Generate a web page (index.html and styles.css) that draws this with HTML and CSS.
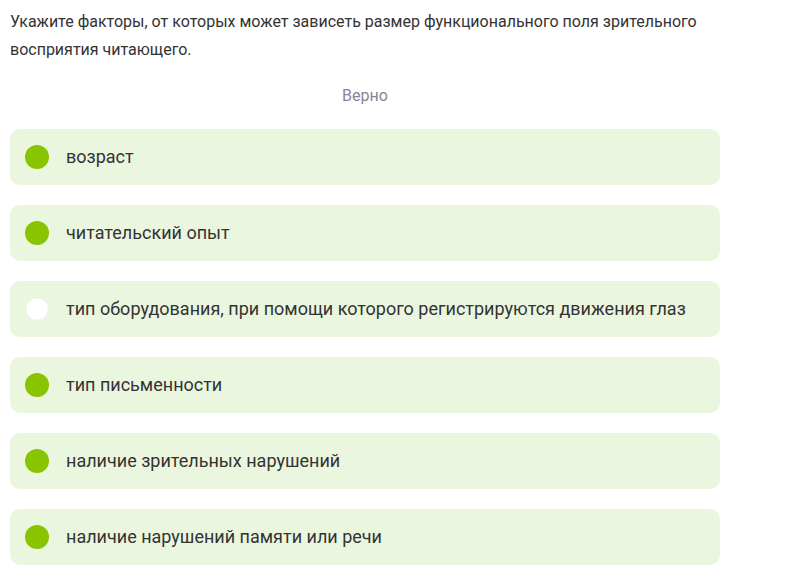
FILE: index.html
```html
<!DOCTYPE html>
<html lang="ru">
<head>
    <meta charset="UTF-8">
    <meta name="viewport" content="width=device-width, initial-scale=1.0">
    <title>Вопрос</title>
    <link rel="stylesheet" href="styles.css">
</head>
<body>

<div class="question">
    <p class="question-text">Укажите факторы, от которых может зависеть размер функционального поля зрительного восприятия читающего.</p>
    <div class="result">Верно</div>

    <div class="answers">
        <div class="answer">
            <span class="mark checked"></span>
            <span class="answer-text">возраст</span>
        </div>
        <div class="answer">
            <span class="mark checked"></span>
            <span class="answer-text">читательский опыт</span>
        </div>
        <div class="answer">
            <span class="mark"></span>
            <span class="answer-text">тип оборудования, при помощи которого регистрируются движения глаз</span>
        </div>
        <div class="answer">
            <span class="mark checked"></span>
            <span class="answer-text">тип письменности</span>
        </div>
        <div class="answer">
            <span class="mark checked"></span>
            <span class="answer-text">наличие зрительных нарушений</span>
        </div>
        <div class="answer">
            <span class="mark checked"></span>
            <span class="answer-text">наличие нарушений памяти или речи</span>
        </div>
    </div>
</div>

</body>
</html>
```

FILE: styles.css
```css
body {
    font-family: Roboto, Arial, sans-serif;
    background-color: #ffffff;
    color: #333333;
    margin: 0;
    padding: 8px 10px;
}
.question {
    width: 710px;
}
.question-text {
    margin: 0;
    font-size: 16px;
    line-height: 28px;
    width: 700px;
}
.result {
    margin-top: 18px;
    text-align: center;
    font-size: 16px;
    line-height: 28px;
    color: #8a8494;
}
.answers {
    margin-top: 19px;
    display: flex;
    flex-direction: column;
    gap: 20px;
}
.answer {
    display: flex;
    align-items: center;
    height: 56px;
    padding-left: 15px;
    border-radius: 10px;
    background-color: #ebf6df;
}
.mark {
    width: 24px;
    height: 24px;
    border-radius: 50%;
    background-color: #ffffff;
    box-sizing: border-box;
    border: 1px solid #e6eee0;
    flex-shrink: 0;
}
.mark.checked {
    background-color: #88c500;
    border: none;
}
.answer-text {
    margin-left: 17px;
    padding-bottom: 2px;
    font-size: 18px;
}
```
